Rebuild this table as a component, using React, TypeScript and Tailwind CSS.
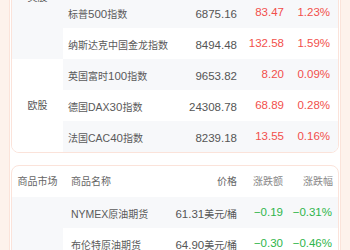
import React from "react";

type R = { name: string; price: string; chg: string; pct: string };

const RED = "text-[#f24f4b]";
const GREEN = "text-[#2db54b]";

function Mixed({ text }: { text: string }) {
  const parts = text.match(/[0-9.]+|[A-Za-z]+|[^0-9.A-Za-z]+/g) || [];
  return (
    <>
      {parts.map((p, i) => {
        if (/^[0-9.]+$/.test(p))
          return (
            <span key={i} className="text-[11.5px]">
              {p}
            </span>
          );
        if (/^[A-Za-z]+$/.test(p))
          return (
            <span key={i} className="text-[10.5px]">
              {p}
            </span>
          );
        return (
          <span key={i} className="text-[10px]">
            {p}
          </span>
        );
      })}
    </>
  );
}

function Group({
  label,
  labelGray,
  rows,
  up,
  wide,
}: {
  label: string;
  labelGray: boolean;
  rows: R[];
  up: boolean;
  wide?: boolean;
}) {
  const color = up ? RED : GREEN;
  return (
    <div className="flex">
      <div
        className={`flex w-[51px] shrink-0 items-center justify-center text-[10px] text-[#555] ${
          labelGray ? "bg-[#f7f8fa]" : "bg-white"
        }`}
      >
        {label}
      </div>
      <div className="flex flex-1 flex-col">
        {rows.map((r, i) => (
          <div
            key={r.name}
            className={`flex h-[31px] items-center whitespace-nowrap ${
              wide ? "pr-[6px]" : "pr-[8px]"
            } ${i % 2 === 0 ? "bg-[#f7f8fa]" : "bg-white"}`}
          >
            <div
              className={`flex-1 text-[#5a5a5a] ${wide ? "pl-[8px]" : "pl-[5px]"}`}
            >
              <Mixed text={r.name} />
            </div>
            <div
              className={`text-right text-[#555] ${
                wide ? "w-[67px]" : "w-[64px]"
              }`}
            >
              <Mixed text={r.price} />
            </div>
            <div
              className={`text-right text-[11.5px] ${color} ${
                wide ? "w-[46px]" : "w-[47px]"
              }`}
            >
              {r.chg}
            </div>
            <div
              className={`text-right text-[11.5px] ${color} ${
                wide ? "w-[49px]" : "w-[46px]"
              }`}
            >
              {r.pct}
            </div>
          </div>
        ))}
      </div>
    </div>
  );
}

export default function App() {
  return (
    <div className="h-[250px] w-[350px] overflow-hidden bg-[#fdf2ec] px-[9px] font-['Liberation_Sans','Noto_Sans_CJK_SC',sans-serif]">
      <div className="flex h-full flex-col border-x border-[#fbe3da] bg-white px-[1px]">
        <div className="-mt-[66px] shrink-0 overflow-hidden rounded-[8px] border border-[#fbe3da] bg-white">
          <Group
            label="美股"
            labelGray
            up
            rows={[
              { name: "道琼斯工业指数", price: "47954.99", chg: "104.05", pct: "0.22%" },
              { name: "纳斯达克指数", price: "23578.13", chg: "72.99", pct: "0.31%" },
              { name: "标普500指数", price: "6875.16", chg: "83.47", pct: "1.23%" },
              { name: "纳斯达克中国金龙指数", price: "8494.48", chg: "132.58", pct: "1.59%" },
            ]}
          />
          <Group
            label="欧股"
            labelGray={false}
            up
            rows={[
              { name: "英国富时100指数", price: "9653.82", chg: "8.20", pct: "0.09%" },
              { name: "德国DAX30指数", price: "24308.78", chg: "68.89", pct: "0.28%" },
              { name: "法国CAC40指数", price: "8239.18", chg: "13.55", pct: "0.16%" },
            ]}
          />
        </div>
        <div className="mt-[12px] shrink-0 overflow-hidden rounded-[8px] border border-[#fbe3da] bg-white">
          <div className="flex h-[31px] items-center whitespace-nowrap pr-[5px] text-[10px] text-[#666]">
            <div className="w-[51px] text-center">商品市场</div>
            <div className="flex-1 pl-[8px]">商品名称</div>
            <div className="w-[67px] text-right">价格</div>
            <div className="w-[46px] text-right text-[#888]">涨跌额</div>
            <div className="w-[50px] text-right text-[#888]">涨跌幅</div>
          </div>
          <Group
            label="国际期货"
            labelGray
            up={false}
            wide
            rows={[
              { name: "NYMEX原油期货", price: "61.31美元/桶", chg: "−0.19", pct: "−0.31%" },
              { name: "布伦特原油期货", price: "64.90美元/桶", chg: "−0.30", pct: "−0.46%" },
              { name: "COMEX黄金期货", price: "4228.70美元/盎司", chg: "−4.80", pct: "−0.11%" },
              { name: "COMEX白银期货", price: "58.37美元/盎司", chg: "−0.41", pct: "−0.70%" },
            ]}
          />
        </div>
      </div>
    </div>
  );
}
